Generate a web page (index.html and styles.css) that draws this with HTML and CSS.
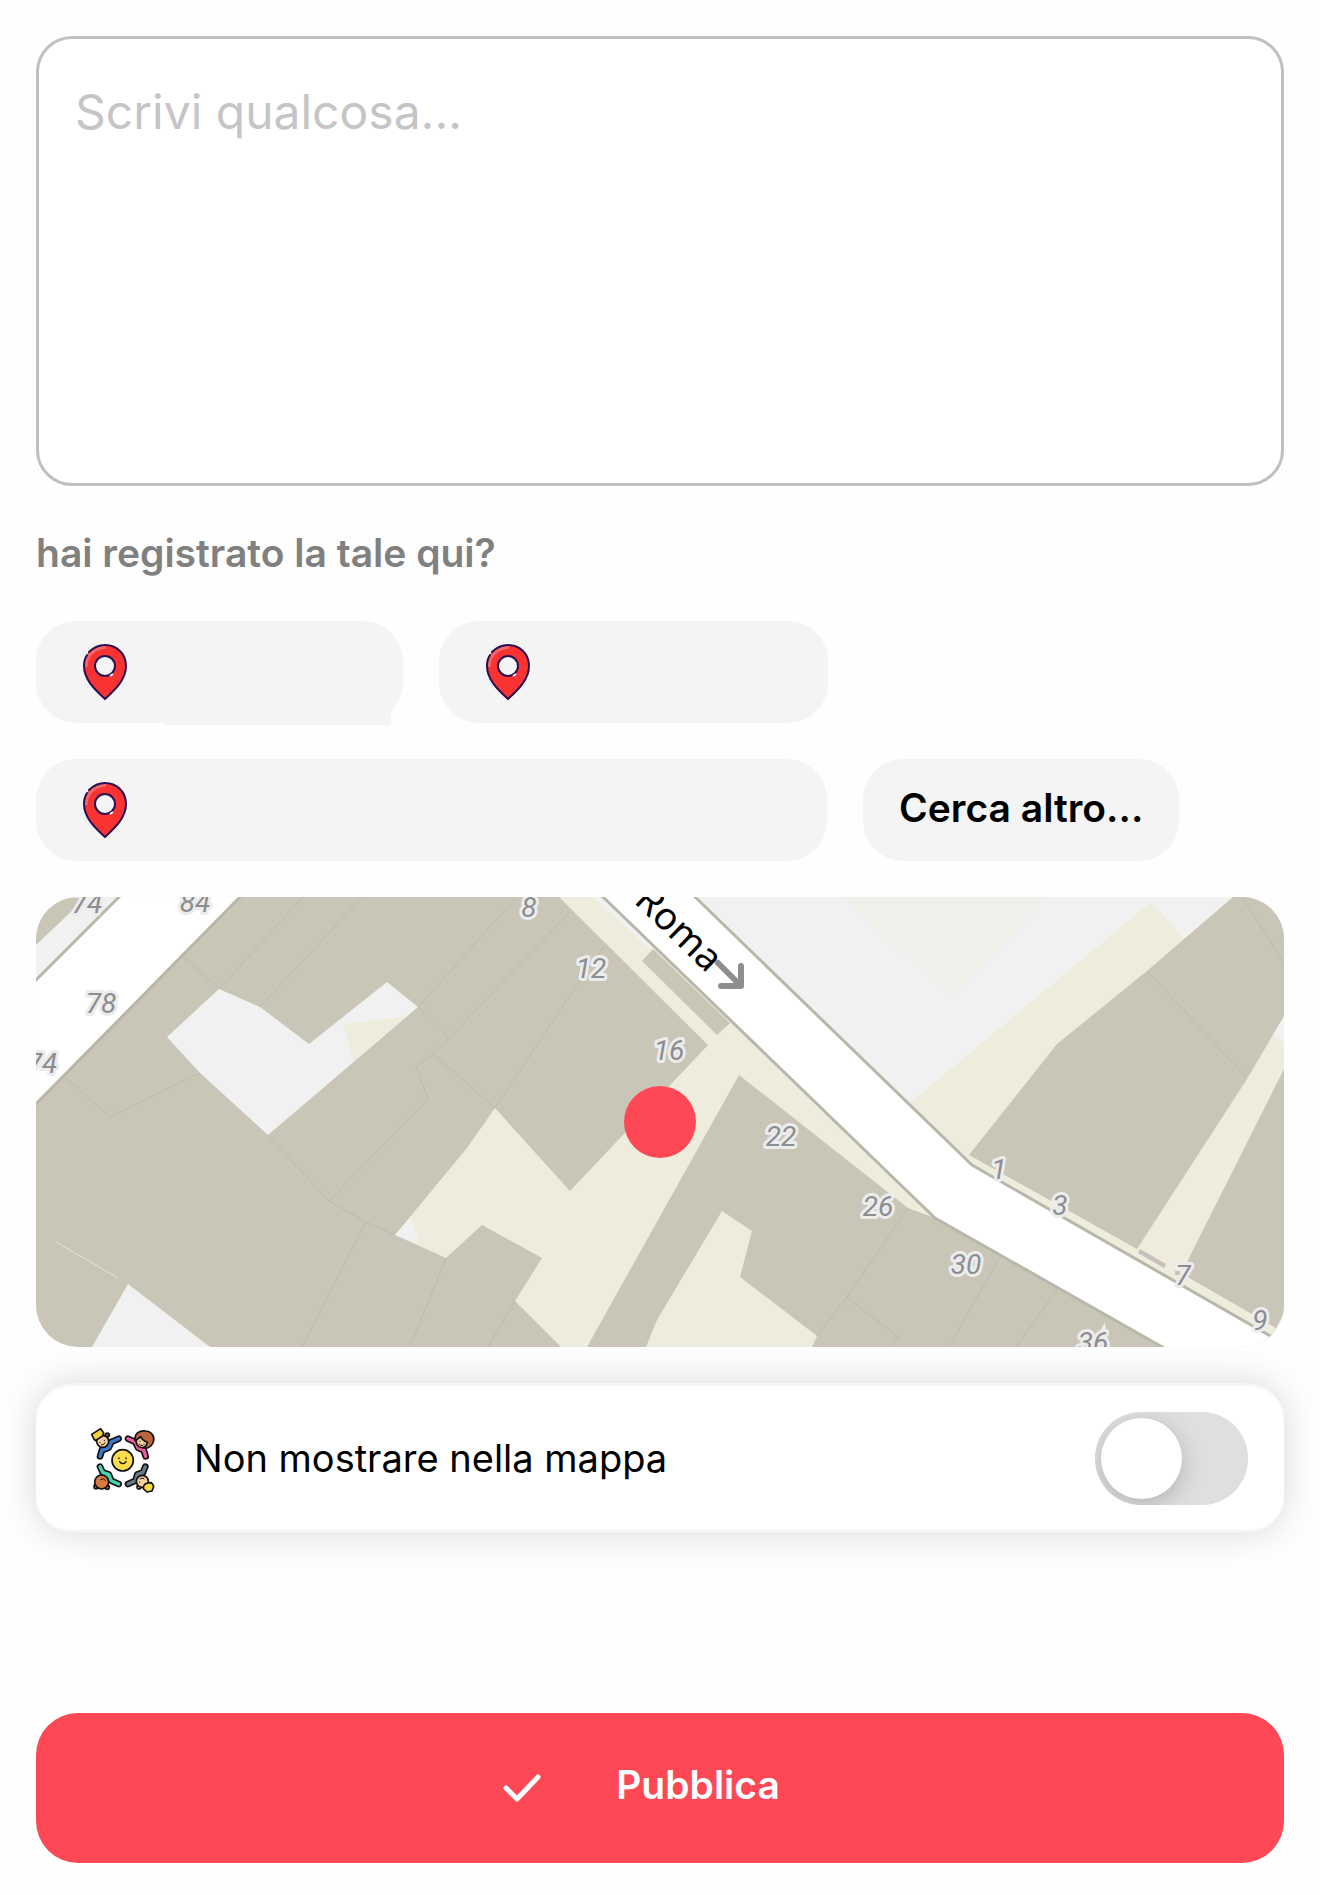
FILE: index.html
```html
<!DOCTYPE html>
<html lang="it">
<head>
  <meta charset="UTF-8">
  <meta name="viewport" content="width=device-width, initial-scale=1.0">
  <title>Pubblica</title>
  <link rel="stylesheet" href="styles.css">
</head>
<body>
  <!-- shared pin icon -->
  <svg width="0" height="0" class="defs" aria-hidden="true">
    <symbol id="pin" viewBox="0 0 46 58">
      <path d="M23 2 C11 2 2 11 2 23 C2 36 12 46 23 56 C34 46 44 36 44 23 C44 11 35 2 23 2 Z" fill="#f93232"/>
      <path d="M4 24 C4 13 12 5 24 4" fill="none" stroke="#ee6b69" stroke-width="3"/>
      <circle cx="23" cy="23" r="10" fill="#f4f4f4" stroke="#2a1052" stroke-width="2"/>
      <path d="M28 33 L31 31" stroke="#f4f4f4" stroke-width="2"/>
      <path d="M7 9 C12 4 17 2 23 2 C35 2 44 11 44 23 C44 36 34 46 23 56 C12 46 2 36 2 23 C2 18 3 15 5 12" fill="none" stroke="#2a1052" stroke-width="2" stroke-linecap="round"/>
    </symbol>
  </svg>

  <form class="post">
    <textarea class="message" placeholder="Scrivi qualcosa..." aria-label="Messaggio"></textarea>

    <h2 class="question">hai registrato la tale qui?</h2>

    <div class="places">
      <button type="button" class="place place-short" aria-label="Luogo 1">
        <svg class="pin"><use href="#pin"/></svg>
        <span class="place-name"></span>
      </button>
      <button type="button" class="place place-medium" aria-label="Luogo 2">
        <svg class="pin"><use href="#pin"/></svg>
      </button>
      <button type="button" class="place place-long" aria-label="Luogo 3">
        <svg class="pin"><use href="#pin"/></svg>
      </button>
      <button type="button" class="place">Cerca altro...</button>
    </div>

    <div class="map">
      <svg class="map-tiles" viewBox="0 0 1248 450" preserveAspectRatio="xMidYMid slice">
        <rect class="building" width="1248" height="450"/>

        <!-- top left street -->
        <polygon class="ground" points="44,0 83,0 0,83 0,48 39,11"/>
        <polygon class="road" points="83,0 204,0 0,207 0,83"/>
        <path class="casing" d="M84 -1 L-1 84 M205 -1 L-1 208"/>

        <!-- courtyards -->
        <polygon class="ground" points="183,92 224,110 273,147 351,85 382,110 232,238 164,176 131,140"/>
        <polygon class="yard" points="307,127 369,120 318,164"/>
        <polygon class="ground" points="92,387 56,450 174,450"/>
        <path class="gap" d="M20 345 L82 381"/>
        <polygon class="yard" points="523,0 567,0 899,321 872,311 703,178 551,450 525,450 479,404 506,361 446,328 410,361 359,338 431,251 459,211 534,294 672,148"/>
        <polygon class="ground" points="359,338 375,320 382,343 380,346"/>
        <polygon class="ground" points="557,0 567,0 619,51 614,52"/>
        <polygon class="building" points="617,52 606,64 681,138 694,126"/>
        <polygon class="yard" points="686,314 716,334 704,380 781,439 776,450 610,450 621,423"/>
        <polygon class="yard" points="1069,425 1072,450 1058,445"/>

        <!-- east side -->
        <polygon class="ground" points="659,0 1248,0 1248,450 1126,450 899,321"/>
        <polygon class="park" points="806,0 1011,0 916,100"/>
        <polygon class="yard" points="874,206 1115,5 1147,40 1237,137 1248,146 1248,450 1126,450"/>
        <polygon class="building" points="1197,0 1248,0 1248,119 1211,182 1101,352 933,258 1021,147 1111,74"/>
        <polygon class="building" points="1152,363 1248,172 1248,416 1240,431 1150,379"/>
        <polygon class="step" points="1104,352 1130,367 1128,371 1102,356"/>
        <rect class="step" x="1139" y="374" width="5" height="4"/>

        <!-- via Roma -->
        <polygon class="road" points="567,0 659,0 936,268 1248,447 1248,450 1126,450 899,321"/>
        <path class="casing" d="M566 -1 L899 321 L1128 451 M658 -1 L936 268 L1250 448"/>

        <!-- walls between buildings -->
        <path class="wall" d="M149 61 L183 92 L267 0 M326 0 L224 110 M481 0 L382 110 L412 140
          M534 15 L414 140 L397 157 L380 170 L392 202 L293 304 M397 157 L459 211 L542 86 L568 50
          M29 180 L74 220 L164 176 M232 238 L293 304 L330 325 L359 338 M330 325 L266 450
          M410 361 L374 450 M479 404 L452 450 M781 439 L811 400 L872 311 M811 400 L862 440 L854 450
          M962 363 L913 450 M1021 392 L980 450 M1206 0 L1248 66 M1111 74 L1210 180"/>

        <g class="number">
          <text x="51" y="16">74</text>
          <text x="159" y="15">84</text>
          <text x="65" y="116">78</text>
          <text x="6" y="176">74</text>
          <text x="493" y="20">8</text>
          <text x="555" y="81">12</text>
          <text x="633" y="163">16</text>
          <text x="745" y="249">22</text>
          <text x="842" y="319">26</text>
          <text x="930" y="377">30</text>
          <text x="963" y="282">1</text>
          <text x="1024" y="318">3</text>
          <text x="1147" y="388">7</text>
          <text x="1224" y="433">9</text>
          <text x="1057" y="455">36</text>
        </g>

        <path class="arrow" d="M682 66 L705 89 M705 69 V89 H685"/>
        <text class="street" transform="translate(597 5) rotate(44)">Roma</text>
      </svg>
      <span class="position"></span>
    </div>

    <label class="option">
      <svg class="people" viewBox="54 40 210 210" aria-hidden="true">
        <g stroke-linecap="round" stroke-linejoin="round">
          <g fill="#111" stroke="#111" stroke-width="20">
            <path d="M146 87 L124 97 L96 120 L90 140 L96 122 L116 114 L124 97"/>
            <path d="M174 87 L196 97 L221 120 L227 140 L221 122 L204 114 L196 97"/>
            <path d="M90 171 L98 188 L124 213 L146 223 L124 213 L116 194 L98 188"/>
            <path d="M226 171 L219 188 L196 213 L174 223 L196 213 L202 194 L219 188"/>
          </g>
          <g stroke-width="10">
            <path d="M146 87 L124 97 L96 120 L90 140 L96 122 L116 114 L124 97" fill="#3b77cf" stroke="#3b77cf"/>
            <path d="M174 87 L196 97 L221 120 L227 140 L221 122 L204 114 L196 97" fill="#f2589f" stroke="#f2589f"/>
            <path d="M90 171 L98 188 L124 213 L146 223 L124 213 L116 194 L98 188" fill="#45d3b0" stroke="#45d3b0"/>
            <path d="M226 171 L219 188 L196 213 L174 223 L196 213 L202 194 L219 188" fill="#667b86" stroke="#667b86"/>
          </g>
        </g>
        <g stroke="#111" stroke-width="5" stroke-linejoin="round">
          <circle cx="112" cy="76" r="6" fill="#8a5a3c"/>
          <circle cx="98" cy="95" r="18" fill="#f8cfa0"/>
          <path d="M65 74 L92 57 L101 70 L98 79 L76 93 L71 87 Z" fill="#f5cf3c"/>
          <path d="M195 92 C193 70 209 62 227 64 C246 65 255 82 250 97 C244 113 231 118 218 114 Z" fill="#b9663e"/>
          <path d="M199 91 L212 81 C216 90 224 95 232 98 C229 114 216 117 207 111 C200 106 198 99 199 91 Z" fill="#f8cfa0"/>
          <circle cx="78" cy="231" r="6" fill="#e58b47"/>
          <circle cx="112" cy="233" r="6" fill="#e58b47"/>
          <circle cx="95" cy="217" r="21" fill="#d97b3f"/>
          <circle cx="207" cy="232" r="6" fill="#f8cfa0"/>
          <circle cx="217" cy="215" r="18" fill="#f8cfa0"/>
          <path d="M220 237 C219 224 228 219 244 219 C247 222 250 226 251 231 L246 244 L231 247 Z" fill="#fddb3a"/>
          <circle cx="158" cy="152" r="32" fill="#fcdc4d"/>
        </g>
        <g fill="none" stroke="#111" stroke-width="4" stroke-linecap="round">
          <path d="M147 145 V147 M168 145 V147 M149 156 C153 164 164 164 168 156"/>
          <path d="M90 98 V99 M103 92 V93 M94 106 Q102 107 105 99" stroke-width="3"/>
          <path d="M210 94 V95 M222 103 V104 M208 103 Q211 110 218 108" stroke-width="3"/>
          <path d="M92 210 Q101 203 107 212" stroke-width="3"/>
          <path d="M210 208 Q217 202 222 207 M209 217 V218" stroke-width="3"/>
        </g>
      </svg>
      <span class="option-text">Non mostrare nella mappa</span>
      <input type="checkbox" class="switch">
    </label>

    <button type="submit" class="publish">
      <svg class="check" viewBox="0 0 36 26" aria-hidden="true">
        <path d="M2 13 L13 24 L34 2"/>
      </svg>
      Pubblica
    </button>
  </form>
</body>
</html>
```
FILE: styles.css
```css
* {
  box-sizing: border-box;
  margin: 0;
  padding: 0;
}

body {
  padding: 36px;
  background-color: #fefefe;
  color: #000;
  font-family: Inter, "Liberation Sans", sans-serif;
  font-size: 38px;
  line-height: 48px;
}

button, textarea {
  font: inherit;
  border: none;
}

.defs {
  position: absolute;
}

.post {
  display: flex;
  flex-direction: column;
}

.message {
  width: 100%;
  height: 450px;
  padding: 43px 36px;
  border: 3px solid #c0c0c0;
  border-radius: 36px;
  background-color: #fff;
  font-size: 48px;
  line-height: 60px;
  resize: none;
}

.message::placeholder {
  color: #c5c5c7;
  opacity: 1;
}

.question {
  margin: 43px 0 44px;
  color: #808080;
  font-size: 39px;
  font-weight: 600;
}

.places {
  display: flex;
  flex-wrap: wrap;
  gap: 36px;
}

.place {
  display: flex;
  align-items: center;
  height: 102px;
  padding: 0 36px 4px;
  border-radius: 40px;
  background-color: #f4f4f4;
  color: #000;
  font-size: 39px;
  font-weight: 600;
}

.place-short,
.place-medium,
.place-long {
  position: relative;
  padding: 0 46px;
}

.place-short {
  width: 367px;
}

.place-medium {
  width: 389px;
}

.place-long {
  width: 791px;
}

.place-name {
  position: absolute;
  right: 12px;
  bottom: -2px;
  width: 226px;
  height: 60px;
  background-color: #f4f4f4;
}

.pin {
  width: 46px;
  height: 58px;
}

/* map */
.map {
  position: relative;
  height: 450px;
  margin: 36px 0;
  border-radius: 42px;
  overflow: hidden;
}

.map-tiles {
  display: block;
  width: 100%;
  height: 100%;
}

.building {
  fill: #c9c5b7;
}

.ground {
  fill: #f1f1f1;
}

.yard {
  fill: #eeecdd;
}

.park {
  fill: #eef0ea;
}

.road {
  fill: #fff;
}

.step {
  fill: #c9bfbe;
}

.casing {
  fill: none;
  stroke: #b8b8aa;
  stroke-width: 3;
}

.wall {
  fill: none;
  stroke: #bcb9b0;
  stroke-width: 1;
}

.gap {
  stroke: #e4e2dc;
  stroke-width: 1;
}

.number {
  fill: #8c8d90;
  stroke: #ececec;
  stroke-width: 6;
  stroke-linejoin: round;
  paint-order: stroke;
  font-family: Roboto, "Liberation Sans", sans-serif;
  font-size: 28px;
  font-style: italic;
  text-anchor: middle;
}

.street {
  font-family: "Noto Sans", sans-serif;
  font-size: 38px;
}

.arrow {
  fill: none;
  stroke: #8e8e8f;
  stroke-width: 6;
  stroke-linecap: round;
  stroke-linejoin: round;
}

.position {
  position: absolute;
  top: 50%;
  left: 50%;
  width: 72px;
  height: 72px;
  border-radius: 50%;
  background-color: #ff4856;
  transform: translate(-50%, -50%);
}

/* map option */
.option {
  display: flex;
  align-items: center;
  height: 150px;
  padding: 0 36px 0 52px;
  border-top: 3px solid #f5f5f5;
  border-bottom: 3px solid #f5f5f5;
  border-radius: 36px;
  background-color: #fff;
  box-shadow: 0 0 36px rgba(0, 0, 0, 0.15);
}

.people {
  width: 70px;
  height: 70px;
}

.option-text {
  flex: 1;
  margin-left: 36px;
}

.switch {
  appearance: none;
  width: 153px;
  height: 93px;
  border-radius: 46px;
  background-color: #dfdfe1;
  overflow: hidden;
}

.switch::before {
  content: "";
  display: block;
  width: 81px;
  height: 81px;
  margin: 6px;
  border-radius: 50%;
  background-color: #fff;
  box-shadow: 0 6px 24px rgba(0, 0, 0, 0.2);
}

.switch:checked {
  background-color: #ff4856;
}

.switch:checked::before {
  margin-left: 66px;
}

.publish {
  display: flex;
  align-items: center;
  justify-content: center;
  gap: 76px;
  height: 150px;
  margin-top: 180px;
  padding: 0 36px 6px 0;
  border-radius: 42px;
  background-color: #ff4856;
  color: #fff;
  font-size: 39px;
  font-weight: 600;
}

.check {
  width: 36px;
  height: 26px;
  margin-top: 6px;
  overflow: visible;
}

.check path {
  fill: none;
  stroke: #fff;
  stroke-width: 5;
  stroke-linecap: round;
  stroke-linejoin: round;
}
```
